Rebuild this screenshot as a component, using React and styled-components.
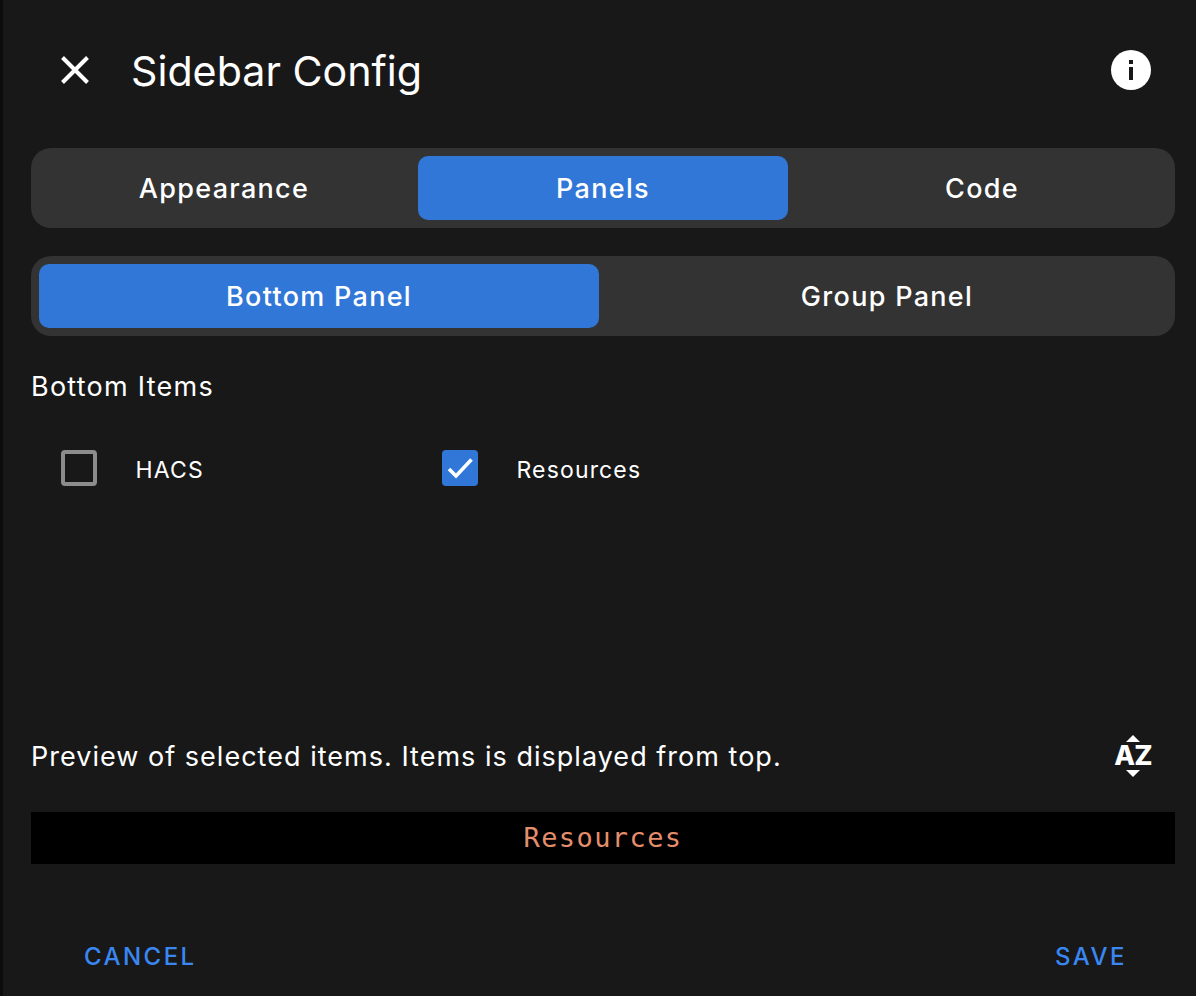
import React from "react"
import styled, { createGlobalStyle } from "styled-components"

const Global = createGlobalStyle`
  html, body {
    margin: 0;
    padding: 0;
    background: #0c0c0c;
  }
`

const Dialog = styled.div`
  box-sizing: border-box;
  margin-left: 3px;
  width: 1193px;
  height: 996px;
  padding: 0 21px 0 28px;
  background: #181818;
  color: #fff;
  font-family: Inter, "Liberation Sans", sans-serif;
  display: flex;
  flex-direction: column;
`

const Header = styled.div`
  height: 140px;
  display: flex;
  align-items: center;
  flex-shrink: 0;
  padding: 0 24px 8px 30px;
`

const CloseButton = styled.div`
  width: 28px;
  height: 28px;
  display: flex;
  margin-right: 42px;
`

const Title = styled.h1`
  flex: 1;
  margin: 2px 0 0;
  font-size: 41.2px;
  font-weight: 400;
  line-height: 50px;
`

const InfoIcon = styled.svg`
  width: 40px;
  height: 40px;
  display: block;
`

const Tabs = styled.div`
  height: 80px;
  box-sizing: border-box;
  padding: 8px;
  background: #333333;
  border-radius: 20px;
  display: grid;
  grid-template-columns: repeat(${props => props.cols}, 1fr);
  gap: ${props => props.gap}px;
  margin-bottom: 28px;
`

const Tab = styled.div`
  border-radius: 10px;
  background: ${props => (props.$active ? "#3077d8" : "transparent")};
  display: flex;
  align-items: center;
  justify-content: center;
  font-size: 27px;
  font-weight: 450;
  letter-spacing: 1.3px;
`

const SectionLabel = styled.div`
  font-size: 27px;
  line-height: 32px;
  letter-spacing: 1.25px;
  margin-top: 7px;
`

const Items = styled.div`
  display: flex;
  margin-top: 47px;
  padding-left: 30px;
  height: 286px;
`

const Item = styled.div`
  width: 381px;
  height: 36px;
  display: flex;
  align-items: center;
`

const Check = styled.div`
  box-sizing: border-box;
  width: 36px;
  height: 36px;
  border-radius: 4px;
  border: ${props => (props.$on ? "none" : "4px solid #8c8c8c")};
  background: ${props => (props.$on ? "#3077d8" : "transparent")};
  margin-right: 38.5px;
  display: flex;
  align-items: center;
  justify-content: center;
`

const ItemLabel = styled.span`
  display: block;
  margin-top: 4px;
  font-size: 23px;
  letter-spacing: 1.15px;
`

const PreviewRow = styled.div`
  display: flex;
  align-items: center;
  justify-content: space-between;
  padding-right: 22px;
  height: 40px;
`

const PreviewText = styled.div`
  font-size: 27px;
  letter-spacing: 1.02px;
`

const SortIcon = styled.div`
  width: 40px;
  display: flex;
  flex-direction: column;
  align-items: center;
  gap: 2px;
`

const Arrow = styled.div`
  width: 0;
  height: 0;
  border-left: 7px solid transparent;
  border-right: 7px solid transparent;
  border-${props => (props.$down ? "top" : "bottom")}: 7px solid #fff;
`

const SortLetters = styled.div`
  font-size: 27px;
  font-weight: 800;
  line-height: 24px;
  letter-spacing: -0.8px;
`

const PreviewBar = styled.div`
  margin-top: 36px;
  height: 52px;
  padding-bottom: 2px;
  box-sizing: border-box;
  background: #000;
  display: flex;
  align-items: center;
  justify-content: center;
  color: #e58e6c;
  font-family: "DejaVu Sans Mono", monospace;
  font-size: 27px;
  letter-spacing: 1.4px;
`

const Actions = styled.div`
  display: flex;
  justify-content: space-between;
  padding: 0 48px 0 53px;
  margin-top: 78px;
`

const Action = styled.div`
  color: #3a87f2;
  font-size: 24px;
  font-weight: 450;
  letter-spacing: 2.45px;
`

const App = () => {
  return (
    <>
      <Global />
      <Dialog>
        <Header>
          <CloseButton>
            <svg width="28" height="28" viewBox="0 0 28 28">
              <path d="M1.5 1.5 L26.5 26.5 M26.5 1.5 L1.5 26.5" stroke="#fff" strokeWidth="4" fill="none" />
            </svg>
          </CloseButton>
          <Title>Sidebar Config</Title>
          <InfoIcon viewBox="0 0 40 40">
            <circle cx="20" cy="20" r="20" fill="#fff" />
            <rect x="18" y="10" width="4" height="4" fill="#181818" />
            <rect x="18" y="17" width="4" height="13" fill="#181818" />
          </InfoIcon>
        </Header>
        <Tabs cols={3} gap={9}>
          <Tab>Appearance</Tab>
          <Tab $active>Panels</Tab>
          <Tab>Code</Tab>
        </Tabs>
        <Tabs cols={2} gap={8}>
          <Tab $active>Bottom Panel</Tab>
          <Tab>Group Panel</Tab>
        </Tabs>
        <SectionLabel>Bottom Items</SectionLabel>
        <Items>
          <Item>
            <Check />
            <ItemLabel>HACS</ItemLabel>
          </Item>
          <Item>
            <Check $on>
              <svg width="28" height="28" viewBox="0 0 28 28">
                <path d="M3 15 L10 22 L25.5 5.5" stroke="#fff" strokeWidth="3.6" fill="none" />
              </svg>
            </Check>
            <ItemLabel>Resources</ItemLabel>
          </Item>
        </Items>
        <PreviewRow>
          <PreviewText>Preview of selected items. Items is displayed from top.</PreviewText>
          <SortIcon>
            <Arrow />
            <SortLetters>AZ</SortLetters>
            <Arrow $down />
          </SortIcon>
        </PreviewRow>
        <PreviewBar>Resources</PreviewBar>
        <Actions>
          <Action>CANCEL</Action>
          <Action>SAVE</Action>
        </Actions>
      </Dialog>
    </>
  )
}

export default App
